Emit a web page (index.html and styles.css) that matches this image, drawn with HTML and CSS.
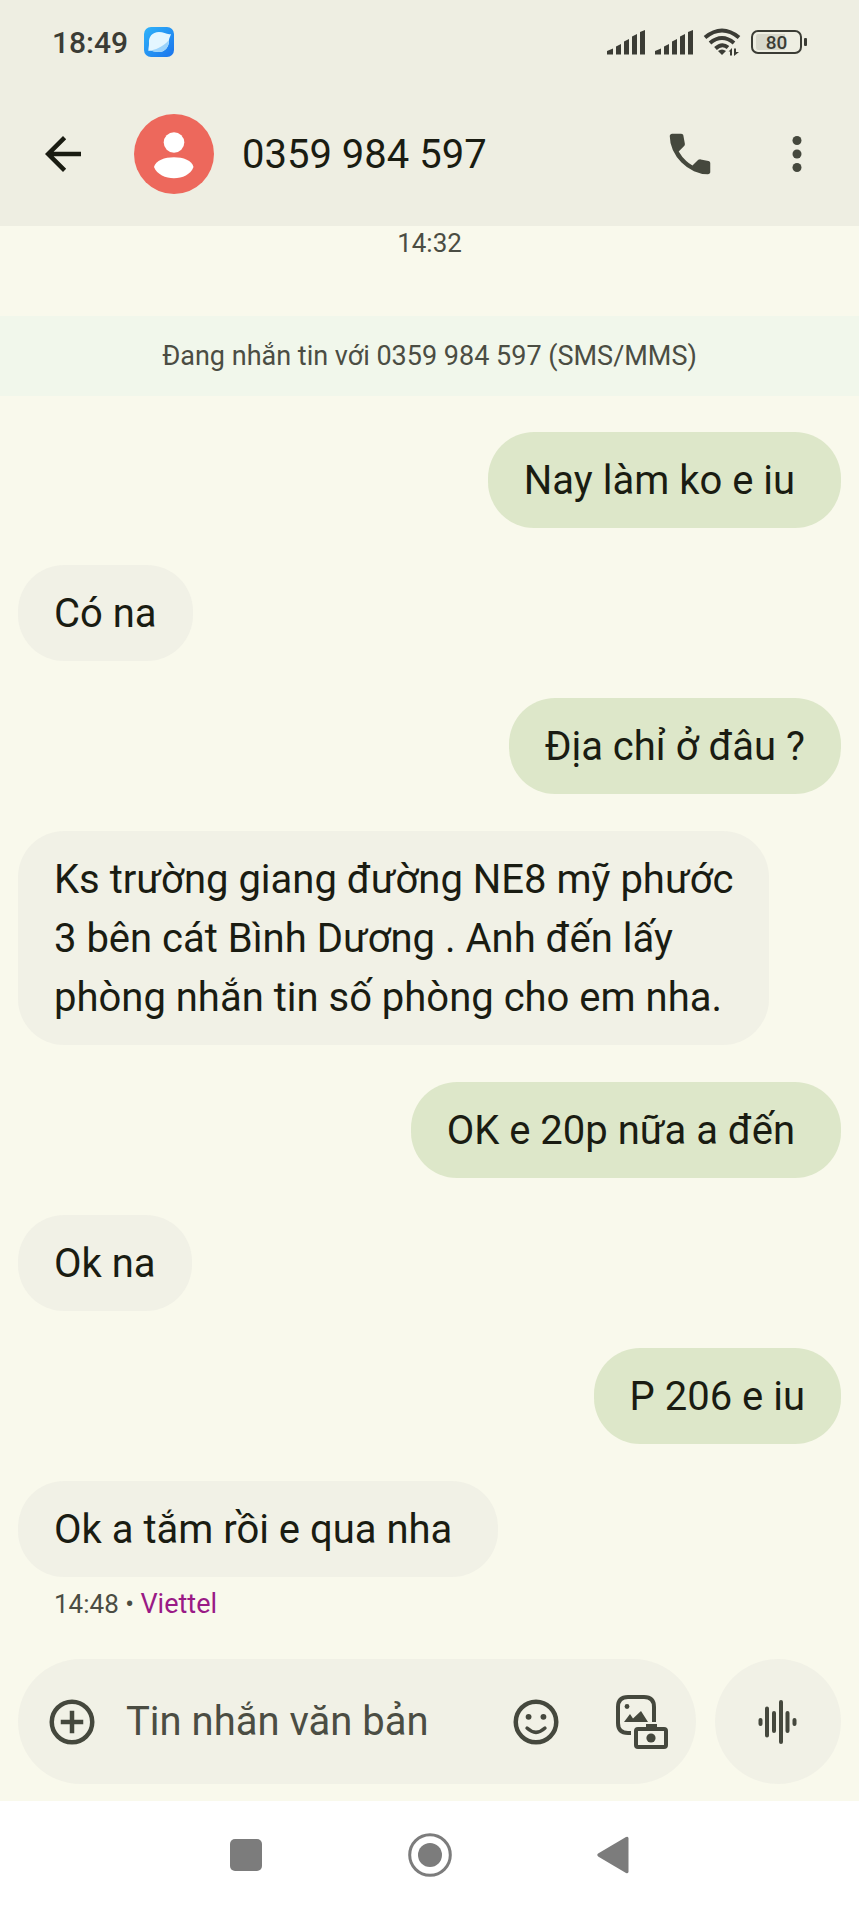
FILE: index.html
```html
<!DOCTYPE html>
<html lang="vi">
<head>
<meta charset="utf-8">
<meta name="viewport" content="width=device-width, initial-scale=1">
<title>0359 984 597</title>
<link rel="stylesheet" href="styles.css">
</head>
<body>
<div class="screen">
  <header class="top">
    <div class="status">
      <time class="clock">18:49</time>
      <svg class="app-badge" viewBox="0 0 30 30" aria-hidden="true">
        <defs>
          <linearGradient id="badge" x1="0" y1="0" x2="1" y2="1">
            <stop offset="0" stop-color="#2fb4fa"/><stop offset="1" stop-color="#1a73ec"/>
          </linearGradient>
        </defs>
        <rect width="30" height="30" rx="7" fill="url(#badge)"/>
        <path d="M27 7C23 8 20 5 15 5C8 5 4.500 10 5 16C5.200 19 4 22 4.500 24C8 23 10 25 15 25C21 25 25 20 25 14C24.700 12 26.500 9 27 7Z" fill="#e4f6ff"/>
        <path d="M25 13C19 20 11 23 4.500 24C8 23 10 25 15 25C21 25 25 20 25 13Z" fill="#9bd3fb"/>
      </svg>
      <div class="status-icons">
        <svg class="signal" viewBox="0 0 38 25" aria-hidden="true">
          <path d="M0 24.500V21L6 18.500V24.500ZM9 24.500V16.500L14 14V24.500ZM17 24.500V11.500L22 9V24.500ZM25 24.500V6.500L30 4V24.500ZM33 24.500V2L38 0V24.500Z"/>
        </svg>
        <svg class="signal" viewBox="0 0 38 25" aria-hidden="true">
          <path d="M0 24.500V21L6 18.500V24.500ZM9 24.500V16.500L14 14V24.500ZM17 24.500V11.500L22 9V24.500ZM25 24.500V6.500L30 4V24.500ZM33 24.500V2L38 0V24.500Z"/>
        </svg>
        <svg class="wifi" viewBox="0 0 38 28" aria-hidden="true">
          <path class="arc" d="M2 9.500Q19-4.500 36 9.500M7 15Q19 5 31 15M12.500 20.500Q19 14.500 25 19.500"/>
          <path d="M15 23Q19 20 23 23L19 27Z"/>
          <path d="M25.500 23.500L29 20V27.500H27V23.500ZM31 20.500H33V24H36L31 28Z"/>
        </svg>
        <div class="battery">
          <span class="battery-body">80</span><span class="battery-tip"></span>
        </div>
      </div>
    </div>
    <div class="appbar">
      <button class="icon-btn back" type="button" aria-label="Quay lại">
        <svg class="icon ink" viewBox="0 0 24 24"><path d="M20 11H7.830L13.420 5.410L12 4L4 12L12 20L13.410 18.590L7.830 13H20Z"/></svg>
      </button>
      <svg class="avatar" viewBox="0 0 80 80" aria-hidden="true">
        <circle cx="40" cy="40" r="40" fill="#ed685c"/>
        <circle cx="40" cy="28.500" r="10.300" fill="#fff"/>
        <path d="M20 53C23 40 57 40 59.500 53C54 68 26 68 20 53Z" fill="#fff"/>
      </svg>
      <h1 class="title">0359 984 597</h1>
      <div class="actions">
        <button class="icon-btn" type="button" aria-label="Gọi">
          <svg class="icon" viewBox="0 0 24 24"><path d="M19.950 21Q16.825 21 13.775 19.638Q10.725 18.275 8.225 15.775Q5.725 13.275 4.363 10.225Q3 7.175 3 4.050Q3 3.600 3.300 3.300Q3.600 3 4.050 3H8.100Q8.450 3 8.725 3.238Q9 3.475 9.050 3.800L9.700 7.300Q9.750 7.700 9.675 7.975Q9.600 8.250 9.400 8.450L6.975 10.900Q8.350 13.300 10.350 15.150Q11.500 16.250 13.100 17.150L15.450 14.800Q15.675 14.575 16.038 14.463Q16.400 14.350 16.750 14.400L20.200 15.100Q20.550 15.200 20.775 15.463Q21 15.725 21 16.050V19.950Q21 20.400 20.700 20.700Q20.400 21 19.950 21Z"/></svg>
        </button>
        <button class="icon-btn" type="button" aria-label="Tùy chọn khác">
          <svg class="icon" viewBox="0 0 24 24"><circle cx="12" cy="6" r="2"/><circle cx="12" cy="12" r="2"/><circle cx="12" cy="18" r="2"/></svg>
        </button>
      </div>
    </div>
  </header>

  <main class="chat">
    <time class="day-time">14:32</time>
    <p class="notice">Đang nhắn tin với 0359 984 597 (SMS/MMS)</p>
    <div class="thread">
      <p class="bubble sent">Nay làm ko e iu&nbsp;</p>
      <p class="bubble received">Có na</p>
      <p class="bubble sent">Địa chỉ ở đâu ?</p>
      <p class="bubble received">Ks trường giang đường NE8 mỹ phước<br>3 bên cát Bình Dương . Anh đến lấy<br>phòng nhắn tin số phòng cho em nha.</p>
      <p class="bubble sent">OK e 20p nữa a đến&nbsp;</p>
      <p class="bubble received">Ok na</p>
      <p class="bubble sent">P 206 e iu</p>
      <p class="bubble received">Ok a tắm rồi e qua nha&nbsp;</p>
    </div>
    <p class="meta">14:48 • <span class="carrier">Viettel</span></p>
  </main>

  <form class="composer">
    <div class="field">
      <button class="icon-btn" type="button" aria-label="Thêm">
        <svg class="icon line" viewBox="0 0 24 24"><circle cx="12" cy="12" r="9"/><path d="M12 7V17M7 12H17"/></svg>
      </button>
      <input class="message" type="text" placeholder="Tin nhắn văn bản" aria-label="Tin nhắn văn bản">
      <button class="icon-btn" type="button" aria-label="Biểu tượng cảm xúc">
        <svg class="icon" viewBox="0 0 24 24"><circle class="stroke" cx="12" cy="12" r="9"/><circle cx="8.700" cy="9.700" r="1.300"/><circle cx="15.300" cy="9.700" r="1.300"/><path class="stroke thin" d="M8 14.700Q12 18.500 16 14.700"/></svg>
      </button>
      <button class="icon-btn gallery" type="button" aria-label="Thư viện ảnh">
        <svg class="icon" viewBox="0 0 54 54"><path class="stroke heavy" d="M39 27V12Q39 2 29 2H13Q3 2 3 12V28Q3 38 13 38H16"/><circle cx="12" cy="11.500" r="2.400"/><path d="M9 27L15 19L18 23.500L26 16L33 27Z"/><path d="M31 29H42V34H31Z"/><rect class="stroke heavy" x="21" y="34" width="30" height="18" rx="2"/><circle cx="36" cy="43" r="4.600"/></svg>
      </button>
    </div>
    <button class="voice" type="button" aria-label="Ghi âm">
      <svg class="icon" viewBox="0 0 54 54"><path class="wave" d="M9.500 25V29M16 13.500V40.500M23 18V36M30 7V47M36.500 18V36M43.500 25V29"/></svg>
    </button>
  </form>

  <nav class="sysnav">
    <button class="nav-btn" type="button" aria-label="Gần đây"><svg viewBox="0 0 44 44"><rect x="6" y="6" width="32" height="32" rx="5"/></svg></button>
    <button class="nav-btn" type="button" aria-label="Màn hình chính"><svg viewBox="0 0 44 44"><circle class="ring" cx="22" cy="22" r="20.300"/><circle cx="22" cy="22" r="12"/></svg></button>
    <button class="nav-btn" type="button" aria-label="Trở về"><svg viewBox="0 0 44 44"><path d="M6.500 20.300L34 4Q36.500 3 36.500 5.500V38.500Q36.500 41 34 40L6.500 23.700Q4 22 6.500 20.300Z"/></svg></button>
  </nav>
</div>
</body>
</html>
```
FILE: styles.css
```css
* { box-sizing: border-box; }

body {
  margin: 0;
  background: #f9f9ec;
  color: #1a1c12;
  font-family: Roboto, "Noto Sans", sans-serif;
}

p, h1 { margin: 0; }

button {
  border: 0;
  padding: 0;
  background: none;
  color: inherit;
  font: inherit;
}

svg { display: block; }

.screen {
  display: flex;
  flex-direction: column;
  min-height: 100vh;
}

.top { background: #eeeee2; }

.status {
  display: flex;
  align-items: center;
  height: 82px;
  padding: 2px 52px 0;
  color: #3b3c35;
}

.clock {
  font-size: 30px;
  font-weight: 500;
}

.app-badge {
  width: 30px;
  height: 30px;
  margin-left: 16px;
}

.status-icons {
  display: flex;
  align-items: center;
  gap: 10px;
  margin-left: auto;
  fill: #3b3c35;
}

.signal { width: 38px; height: 25px; }

.wifi { width: 38px; height: 28px; }

.arc {
  fill: none;
  stroke: #3b3c35;
  stroke-width: 4;
}

.battery {
  display: flex;
  align-items: center;
  gap: 2px;
}

.battery-body {
  width: 51px;
  height: 24px;
  border: 2px solid #3b3c35;
  border-radius: 7px;
  background: linear-gradient(90deg, #d8d8cc 70%, transparent 70%) content-box;
  padding: 2px 3px;
  font-size: 19px;
  font-weight: 500;
  line-height: 17px;
  text-align: center;
}

.battery-tip {
  width: 3px;
  height: 8px;
  border-radius: 1px;
  background: #3b3c35;
}

.appbar {
  display: flex;
  align-items: center;
  height: 144px;
  padding: 0 35px 0 36px;
}

.avatar {
  width: 80px;
  height: 80px;
  margin: 0 28px 0 44px;
}

.title {
  font-size: 40px;
  font-weight: 400;
}

.actions {
  display: flex;
  gap: 53px;
  margin-left: auto;
}

.icon {
  width: 54px;
  height: 54px;
  fill: #45483d;
}

.ink { fill: #1a1c12; }

.line,
.stroke {
  fill: none;
  stroke: #45483d;
  stroke-width: 2;
}

.thin {
  stroke-width: 1.5;
  stroke-linecap: round;
}

.heavy { stroke-width: 4; }

.wave {
  fill: none;
  stroke: #45483d;
  stroke-width: 4;
  stroke-linecap: round;
}

.chat {
  display: flex;
  flex-direction: column;
}

.day-time,
.notice,
.meta {
  color: #4b4d43;
  font-size: 26px;
  line-height: 34px;
}

.day-time {
  text-align: center;
  padding-bottom: 56px;
}

.notice {
  padding: 23px 16px;
  background: #f1f7eb;
  font-size: 27px;
  text-align: center;
}

.thread {
  display: flex;
  flex-direction: column;
  gap: 37px;
  padding: 36px 18px 0;
}

.bubble {
  padding: 19px 36px 18px;
  border-radius: 46px;
  font-size: 40px;
  line-height: 59px;
}

.sent {
  align-self: flex-end;
  background: #dde7c9;
}

.received {
  align-self: flex-start;
  background: #f1f1e6;
}

.meta { padding: 10px 54px 0; }

.carrier {
  color: #9a1a86;
  font-size: 27px;
}

.composer {
  display: flex;
  gap: 19px;
  margin-top: auto;
  padding: 37px 18px 17px;
}

.field {
  display: flex;
  flex: 1;
  align-items: center;
  min-width: 0;
  height: 125px;
  padding: 0 27px;
  border-radius: 63px;
  background: #f1f1e6;
}

.message {
  flex: 1;
  min-width: 0;
  margin: 0 27px;
  padding: 0;
  border: 0;
  background: none;
  color: #1a1c12;
  font: inherit;
  font-size: 40px;
  line-height: 59px;
}

.message::placeholder {
  color: #4b4d43;
  opacity: 1;
}

.gallery { margin-left: 52px; }

.voice {
  display: flex;
  align-items: center;
  justify-content: center;
  width: 126px;
  height: 125px;
  border-radius: 50%;
  background: #f1f1e6;
}

.sysnav {
  display: flex;
  align-items: center;
  justify-content: center;
  gap: 140px;
  height: 107px;
  background: #fff;
}

.nav-btn {
  width: 44px;
  height: 44px;
  fill: #7c7c7c;
}

.ring {
  fill: none;
  stroke: #7c7c7c;
  stroke-width: 3;
}
```
